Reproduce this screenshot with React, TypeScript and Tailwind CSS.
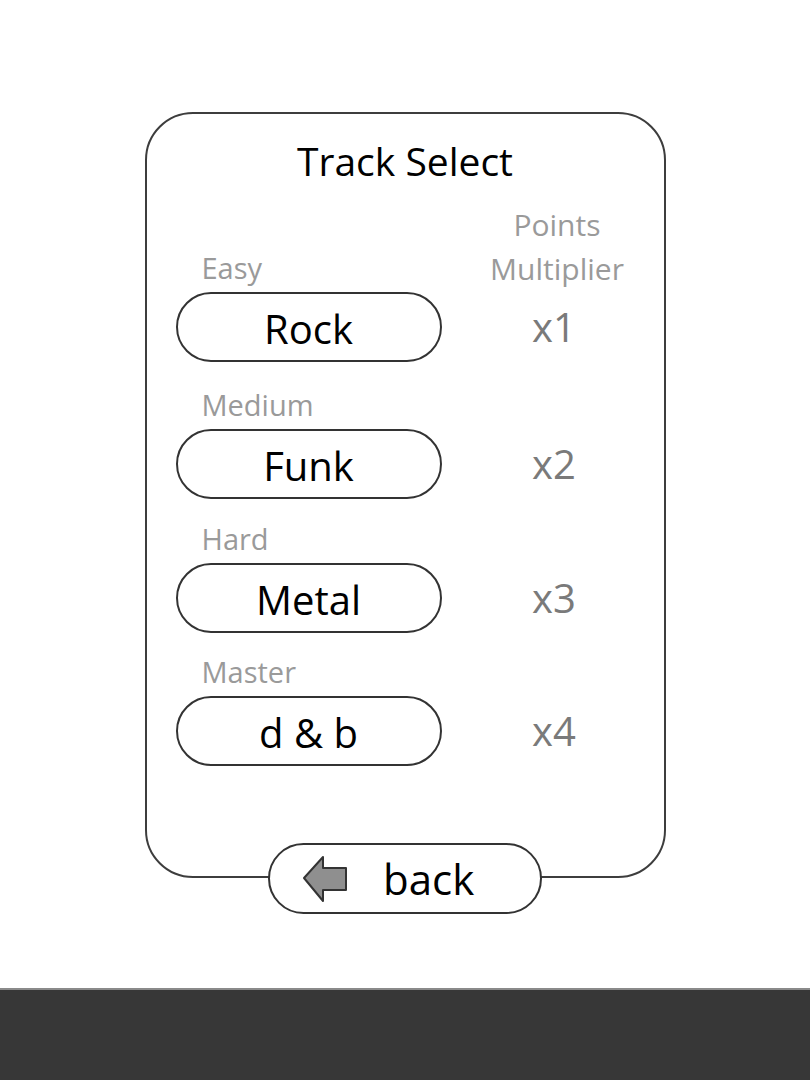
import React from "react";

const rows = [
  { level: "Easy", track: "Rock", mult: "x1", mt: "mt-0" },
  { level: "Medium", track: "Funk", mult: "x2", mt: "mt-[28px]" },
  { level: "Hard", track: "Metal", mult: "x3", mt: "mt-[25px]" },
  { level: "Master", track: "d & b", mult: "x4", mt: "mt-[24px]" },
];

function BackArrow() {
  return (
    <svg width="48" height="50" viewBox="0 0 48 50">
      <polygon
        points="3,24 22,3 22,14 45,14 45,36 22,36 22,47"
        fill="#8f8f8f"
        stroke="#333"
        strokeWidth="2"
        strokeLinejoin="round"
      />
    </svg>
  );
}

export default function App() {
  return (
    <div
      className="w-[810px] h-[1080px] flex flex-col bg-white"
      style={{ fontFamily: '"Open Sans", "Noto Sans", sans-serif' }}
    >
      <div className="h-[988px] flex flex-col items-center pt-[112px]">
        <div className="w-[521px] h-[766px] border-2 border-[#3d3d3d] rounded-[48px] pt-[23px] pl-[29px] flex flex-col">
          <div className="text-[39px] leading-[48px] text-black text-center -ml-[29px]">
            Track Select
          </div>
          <div className="mt-[18px] flex flex-col">
            {rows.map((r, i) => (
              <div key={r.level} className={`flex items-end ${r.mt}`}>
                <div className="w-[266px] flex flex-col">
                  <div className="text-[29px] leading-[30px] text-[#9a9a9a] pl-[26px]">
                    {r.level}
                  </div>
                  <div className="mt-[9px] h-[70px] pt-[4px] border-2 border-[#333] rounded-full flex items-center justify-center text-[40px] text-black">
                    {r.track}
                  </div>
                </div>
                <div className="flex-1 flex flex-col items-center pl-[3px]">
                  {i === 0 && (
                    <div className="text-[30px] leading-[44px] text-[#9a9a9a] text-center mb-[1px] pl-[6px]">
                      <div>Points</div>
                      <div>Multiplier</div>
                    </div>
                  )}
                  <div className="h-[70px] flex items-center text-[40px] text-[#7a7a7a]">
                    {r.mult}
                  </div>
                </div>
              </div>
            ))}
          </div>
        </div>
        <div className="-mt-[35px] w-[274px] h-[71px] border-2 border-[#333] rounded-full bg-white flex items-center pl-[31px]">
          <BackArrow />
          <span className="ml-[34px] text-[42px] leading-none text-black">back</span>
        </div>
      </div>
      <div className="flex-1 bg-[#373737] border-t-2 border-[#8a8a8a]" />
    </div>
  );
}
